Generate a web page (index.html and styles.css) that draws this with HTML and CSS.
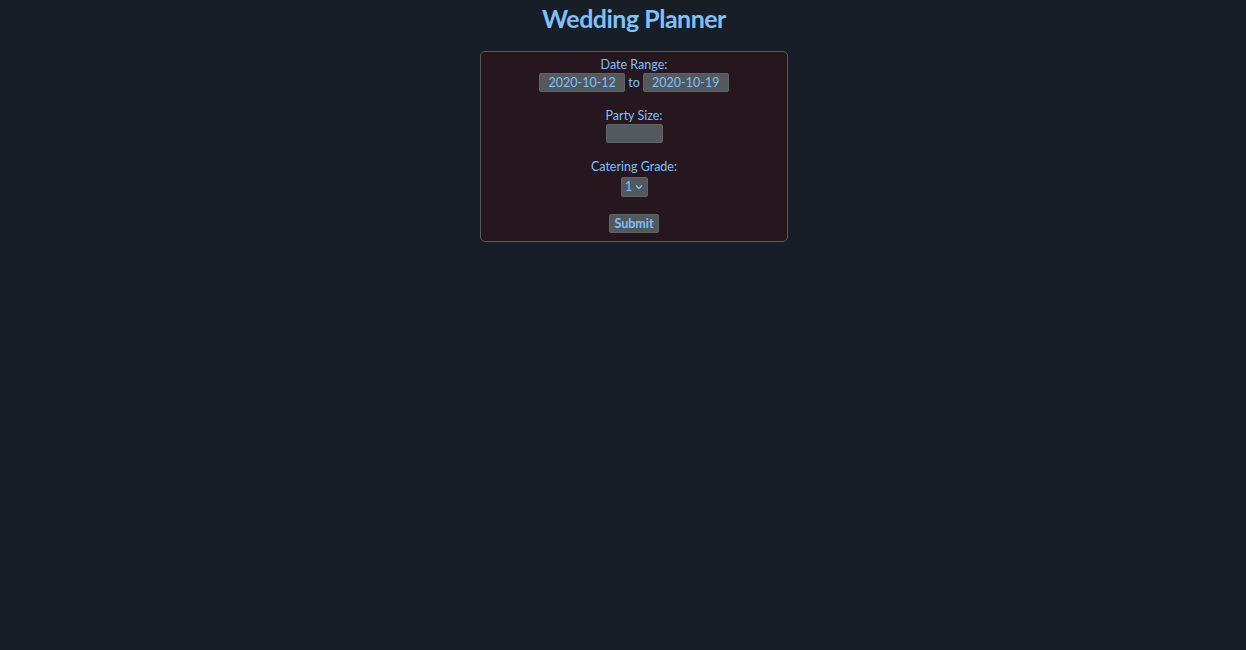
FILE: index.html
```html
<!DOCTYPE html>
<html>
<head>
<meta charset="utf-8">
<link rel="stylesheet" href="styles.css">
</head>
<body>
<h1 class="title">Wedding Planner</h1>
<form class="card">
  <div class="group">
    <label class="label">Date Range:</label>
    <div class="row">
      <span class="field date">2020-10-12</span>
      <span class="to">to</span>
      <span class="field date">2020-10-19</span>
    </div>
  </div>
  <div class="group">
    <label class="label">Party Size:</label>
    <div class="row"><span class="field party"></span></div>
  </div>
  <div class="group">
    <label class="label">Catering Grade:</label>
    <div class="row">
      <span class="field select">1
        <svg class="chev" width="8" height="6" viewBox="0 0 8 6"><path d="M1 1.5 L4 4.5 L7 1.5" fill="none" stroke="#7dc1ff" stroke-width="1.4"/></svg>
      </span>
    </div>
  </div>
  <div class="group">
    <div class="row"><span class="field submit">Submit</span></div>
  </div>
</form>
</body>
</html>
```
FILE: styles.css
```css
html, body {
  margin: 0;
  padding: 0;
  background: #181e25;
  height: 100%;
}
body {
  font-family: "Lato", "Liberation Sans", sans-serif;
  color: #7dc1ff;
  display: flex;
  flex-direction: column;
  align-items: center;
  padding-left: 22px;
  box-sizing: border-box;
}
.title {
  margin: 4px 0 0 0;
  font-size: 25px;
  line-height: 29px;
  font-weight: 700;
  letter-spacing: -0.5px;
}
.card {
  margin-top: 18px;
  width: 306px;
  box-sizing: content-box;
  border: 1px solid #5a5a5e;
  border-radius: 5px;
  background: #26171f;
  display: flex;
  flex-direction: column;
  align-items: center;
  padding: 5px 0 8px;
  gap: 16px;
  font-size: 12.5px;
}
.group {
  display: flex;
  flex-direction: column;
  align-items: center;
}
.label {
  line-height: 16px;
  height: 16px;
}
.row {
  display: flex;
  align-items: center;
  gap: 3px;
}
.field {
  background: #53585c;
  border: 1px solid #5f6468;
  border-radius: 2px;
  box-sizing: border-box;
  height: 19px;
  display: flex;
  align-items: center;
  justify-content: center;
  font-size: 12.5px;
  color: #7dc1ff;
}
.date { width: 86px; }
.party { width: 57px; height: 19px; }
.select { width: 27px; height: 20px; gap: 3px; padding-bottom: 1px; margin-top: 2px; }
.chev { display: block; margin-top: 1px; }
.submit { width: 50px; height: 19px; font-weight: 700; margin-top: 1px; }
```
